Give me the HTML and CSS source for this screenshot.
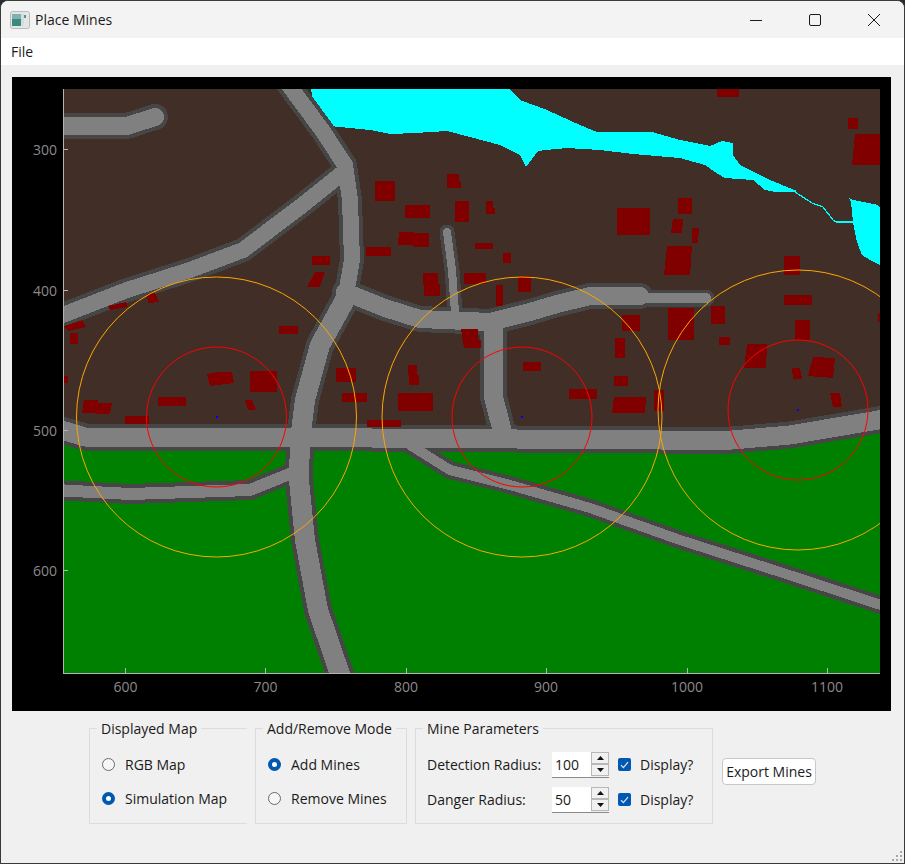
FILE: index.html
```html
<!DOCTYPE html>
<html lang="en">
<head>
  <meta charset="UTF-8">
  <meta name="viewport" content="width=device-width, initial-scale=1.0">
  <title>Place Mines</title>
  <link rel="stylesheet" href="styles.css">
</head>
<body>
  <div class="window">
    <div class="titlebar">
      <svg class="app-icon" width="20" height="18" viewBox="0 0 20 18">
        <rect x="0.5" y="0.5" width="19" height="17" rx="2" fill="#e4e6e6" stroke="#b9bcbc"/>
        <rect x="2" y="3" width="9" height="12" fill="#3b8a7c"/>
        <rect x="2" y="3" width="9" height="5" fill="#7fb0b4"/>
        <rect x="11" y="3" width="3" height="12" fill="#d5dcdc"/>
        <rect x="14" y="4" width="2" height="3" fill="#5f8f9a"/>
      </svg>
      <span class="title">Place Mines</span>
      <div class="caption-buttons">
        <svg class="caption-btn" width="12" height="12" viewBox="0 0 12 12"><path d="M0 6.5H12" stroke="#1a1a1a" fill="none"/></svg>
        <svg class="caption-btn" width="12" height="12" viewBox="0 0 12 12"><rect x="0.5" y="0.5" width="11" height="11" rx="1.5" stroke="#1a1a1a" fill="none"/></svg>
        <svg class="caption-btn" width="12" height="12" viewBox="0 0 12 12"><path d="M0 0L12 12M12 0L0 12" stroke="#1a1a1a" fill="none"/></svg>
      </div>
    </div>
    <div class="menubar"><span>File</span></div>

    <div class="plot">
      <svg width="879" height="634" viewBox="12 77 879 634">
        <defs>
          <clipPath id="map-area"><rect x="63" y="89" width="817" height="584"/></clipPath>
        </defs>
        <g clip-path="url(#map-area)" shape-rendering="crispEdges">
          <rect x="63" y="89" width="817" height="584" fill="#412f27"/>
          <polygon fill="#008000" points="63,440 300,440 660,440 790,437 880,420 880,673 63,673"/>

          <!-- water -->
          <polygon fill="#00ffff" points="311,89 316,117 330,126 370,130 390,134 415,133 447,131 470,137 500,145 520,155 526,167 538,151 545,150 567,148 600,150 633,154 680,158 705,165 715,172 725,178 753,180 765,190 775,192 795,192 797,191 770,180 740,165 733,155 733,143 722,141 710,146 680,140 652,132 597,132 580,125 547,110 520,100 510,89"/>
          <polyline fill="none" stroke="#00ffff" stroke-width="1.2" points="795,192 812,203 823,207 833,220 836,222 853,222"/>
          <polygon fill="#00ffff" points="849,198 853,200 878,205 880,208 880,265 870,260 862,255 857,242 853,222 851,202"/>

          <!-- road casing -->
          <g fill="none" stroke="#464646" stroke-linejoin="round" stroke-linecap="round">
            <polyline stroke-width="26" points="55,126 127,126 155,117"/>
            <polyline stroke-width="24" points="340,175 300,207 243,250 190,270 127,290 55,318"/>
            <polyline stroke-width="26" points="345,292 385,308 420,319 490,322 530,312 557,304 590,296 640,296"/>
            <polyline stroke-width="17" points="640,298 706,298"/>
            <polyline stroke-width="15" points="447,232 452,270 455,312"/>
            <polyline stroke-width="27" points="493,325 493,395 502,430"/>
            <polyline stroke-width="27" points="55,428 85,437 225,437 660,440 720,441 790,435 890,418"/>
            <polyline stroke-width="20" points="55,490 130,494 250,490 292,473"/>
            <polyline stroke-width="18" points="410,445 450,470 510,485 590,508 680,540 780,572 890,608"/>
            <polyline stroke-width="24" points="285,80 322,130 345,165 350,200 352,260 345,300"/>
            <polyline stroke-width="28" points="345,300 320,345 305,400 300,440 299,480 305,540 318,610 342,680"/>
          </g>
          <!-- road surface -->
          <g fill="none" stroke="#808080" stroke-linejoin="round" stroke-linecap="round">
            <polyline stroke-width="18" points="55,126 127,126 155,117"/>
            <polyline stroke-width="16" points="340,175 300,207 243,250 190,270 127,290 55,318"/>
            <polyline stroke-width="18" points="345,292 385,308 420,319 490,322 530,312 557,304 590,296 640,296"/>
            <polyline stroke-width="10" points="640,298 706,298"/>
            <polyline stroke-width="8" points="447,232 452,270 455,312"/>
            <polyline stroke-width="19" points="493,325 493,395 502,430"/>
            <polyline stroke-width="19" points="55,428 85,437 225,437 660,440 720,441 790,435 890,418"/>
            <polyline stroke-width="12" points="55,490 130,494 250,490 292,473"/>
            <polyline stroke-width="10" points="410,445 450,470 510,485 590,508 680,540 780,572 890,608"/>
            <polyline stroke-width="16" points="285,80 322,130 345,165 350,200 352,260 345,300"/>
            <polyline stroke-width="20" points="345,300 320,345 305,400 300,440 299,480 305,540 318,610 342,680"/>
          </g>

          <!-- buildings -->
          <g fill="#800000">
            <rect x="312" y="256" width="18" height="9"/>
            <polygon points="315,272 325,272 320,287 307,287"/>
            <rect x="279" y="326" width="19" height="8"/>
            <rect x="336" y="368" width="20" height="14"/>
            <rect x="342" y="393" width="25" height="9"/>
            <rect x="250" y="371" width="27" height="21"/>
            <polygon points="207,374 218,372 232,372 234,383 210,386"/>
            <rect x="158" y="397" width="28" height="9"/>
            <polygon points="245,400 252,400 256,410 248,410"/>
            <polygon points="84,400 98,400 98,403 112,403 110,414 82,413"/>
            <rect x="125" y="416" width="24" height="8"/>
            <polygon points="64,326 82,320 86,327 68,331"/>
            <rect x="70" y="333" width="8" height="11"/>
            <rect x="64" y="376" width="4" height="7"/>
            <polygon points="108,306 126,302 128,307 110,310"/>
            <polygon points="147,294 155,293 159,302 148,303"/>
            <rect x="375" y="181" width="20" height="20"/>
            <polygon points="447,174 459,174 459,181 461,181 461,188 447,188"/>
            <rect x="405" y="205" width="25" height="13"/>
            <rect x="455" y="201" width="14" height="21"/>
            <polygon points="486,201 493,201 493,208 495,208 495,214 486,214"/>
            <rect x="617" y="208" width="33" height="27"/>
            <polygon points="399,232 414,232 414,233 429,233 429,247 413,247 413,245 398,245"/>
            <rect x="366" y="247" width="25" height="9"/>
            <rect x="475" y="243" width="18" height="6"/>
            <rect x="503" y="253" width="8" height="10"/>
            <polygon points="423,273 438,273 438,284 440,284 440,296 424,296"/>
            <rect x="464" y="273" width="22" height="11"/>
            <rect x="496" y="285" width="7" height="21"/>
            <rect x="518" y="276" width="13" height="16"/>
            <rect x="622" y="315" width="18" height="16"/>
            <rect x="615" y="338" width="10" height="20"/>
            <rect x="614" y="376" width="14" height="10"/>
            <polygon points="614,397 646,397 645,413 612,413"/>
            <rect x="654" y="390" width="10" height="21"/>
            <rect x="569" y="389" width="28" height="10"/>
            <rect x="523" y="362" width="18" height="9"/>
            <polygon points="461,329 478,329 478,340 481,340 481,348 464,348"/>
            <polygon points="408,365 417,365 417,375 419,375 419,385 409,385"/>
            <rect x="398" y="393" width="35" height="18"/>
            <rect x="367" y="420" width="34" height="7"/>
            <rect x="717" y="89" width="22" height="8"/>
            <rect x="848" y="118" width="10" height="11"/>
            <polygon points="855,134 880,134 880,165 852,165"/>
            <rect x="678" y="198" width="14" height="16"/>
            <polygon points="673,219 683,219 682,233 671,233"/>
            <polygon points="692,228 699,228 698,243 692,243"/>
            <polygon points="667,246 692,246 690,275 664,275"/>
            <rect x="784" y="256" width="16" height="19"/>
            <rect x="784" y="295" width="28" height="10"/>
            <rect x="711" y="306" width="14" height="18"/>
            <rect x="668" y="308" width="26" height="32"/>
            <rect x="719" y="337" width="11" height="8"/>
            <rect x="795" y="320" width="15" height="20"/>
            <rect x="878" y="313" width="2" height="9"/>
            <polygon points="747,344 767,344 766,368 744,368"/>
            <polygon points="813,357 835,358 833,378 808,376"/>
            <polygon points="792,368 800,368 802,379 793,379"/>
            <polygon points="830,393 840,393 842,407 833,407"/>
          </g>
        </g>

        <!-- mine markers -->
        <g clip-path="url(#map-area)" fill="none">
          <circle cx="216.5" cy="417" r="140" stroke="#ffa500"/>
          <circle cx="216.5" cy="417" r="70" stroke="#ff0000"/>
          <circle cx="522" cy="417" r="140" stroke="#ffa500"/>
          <circle cx="522" cy="417" r="70" stroke="#ff0000"/>
          <circle cx="798" cy="410" r="140" stroke="#ffa500"/>
          <circle cx="798" cy="410" r="70" stroke="#ff0000"/>
          <rect x="216" y="416" width="2" height="2" fill="#0000ff"/>
          <rect x="521" y="416" width="2" height="2" fill="#0000ff"/>
          <rect x="797" y="409" width="2" height="2" fill="#0000ff"/>
        </g>

        <!-- axes -->
        <g stroke="#b4b4b4" fill="none" shape-rendering="crispEdges">
          <path d="M63.5 89V673.5H880"/>
          <path d="M63 149.5H68M63 290.5H68M63 430.5H68M63 570.5H68"/>
          <path d="M125.5 673V668M265.5 673V668M406.5 673V668M546.5 673V668M687.5 673V668M827.5 673V668"/>
        </g>
        <g class="tick-label">
          <text x="57" y="155" text-anchor="end">300</text>
          <text x="57" y="296" text-anchor="end">400</text>
          <text x="57" y="436" text-anchor="end">500</text>
          <text x="57" y="576" text-anchor="end">600</text>
          <text x="125.5" y="692" text-anchor="middle">600</text>
          <text x="265.5" y="692" text-anchor="middle">700</text>
          <text x="406" y="692" text-anchor="middle">800</text>
          <text x="546" y="692" text-anchor="middle">900</text>
          <text x="687" y="692" text-anchor="middle">1000</text>
          <text x="827" y="692" text-anchor="middle">1100</text>
        </g>
      </svg>
    </div>

    <div class="controls">
      <fieldset class="group group-map">
        <legend>Displayed Map</legend>
        <div class="radio-row"><span class="radio"></span>RGB Map</div>
        <div class="radio-row"><span class="radio on"></span>Simulation Map</div>
      </fieldset>
      <fieldset class="group group-mode">
        <legend>Add/Remove Mode</legend>
        <div class="radio-row"><span class="radio on"></span>Add Mines</div>
        <div class="radio-row"><span class="radio"></span>Remove Mines</div>
      </fieldset>
      <fieldset class="group group-params">
        <legend>Mine Parameters</legend>
        <div class="param-row">
          <span class="param-label">Detection Radius:</span>
          <div class="spin">
            <span class="spin-value">100</span>
            <div class="spin-buttons">
              <span class="spin-btn"><svg width="7" height="4" viewBox="0 0 7 4"><path d="M3.5 0L7 4H0z" fill="#111"/></svg></span>
              <span class="spin-btn"><svg width="7" height="4" viewBox="0 0 7 4"><path d="M0 0H7L3.5 4z" fill="#111"/></svg></span>
            </div>
          </div>
          <span class="check"><svg width="9" height="8" viewBox="0 0 9 8"><path d="M1 4.2L3.4 6.6L8 1.2" stroke="#dfe9f5" stroke-width="1.2" fill="none"/></svg></span>
          <span>Display?</span>
        </div>
        <div class="param-row">
          <span class="param-label">Danger Radius:</span>
          <div class="spin">
            <span class="spin-value">50</span>
            <div class="spin-buttons">
              <span class="spin-btn"><svg width="7" height="4" viewBox="0 0 7 4"><path d="M3.5 0L7 4H0z" fill="#111"/></svg></span>
              <span class="spin-btn"><svg width="7" height="4" viewBox="0 0 7 4"><path d="M0 0H7L3.5 4z" fill="#111"/></svg></span>
            </div>
          </div>
          <span class="check"><svg width="9" height="8" viewBox="0 0 9 8"><path d="M1 4.2L3.4 6.6L8 1.2" stroke="#dfe9f5" stroke-width="1.2" fill="none"/></svg></span>
          <span>Display?</span>
        </div>
      </fieldset>
      <button class="export">Export Mines</button>
    </div>

    <svg class="grip" width="12" height="12" viewBox="0 0 12 12" fill="#a8a8a8">
      <rect x="8" y="0" width="2" height="2"/>
      <rect x="4" y="4" width="2" height="2"/><rect x="8" y="4" width="2" height="2"/>
      <rect x="0" y="8" width="2" height="2"/><rect x="4" y="8" width="2" height="2"/><rect x="8" y="8" width="2" height="2"/>
    </svg>
  </div>
</body>
</html>
```

FILE: styles.css
```css
* {
  box-sizing: border-box;
}
html, body {
  margin: 0;
  height: 100%;
  background: #2b2b2b;
}
body {
  font-family: "Open Sans", "Noto Sans", sans-serif;
  font-size: 14px;
  color: #1a1a1a;
}
.window {
  position: relative;
  height: 864px;
  background: #f0f0f0;
  border: 1px solid #3a3a3a;
  border-radius: 8px 8px 0 0;
  overflow: hidden;
}
.titlebar {
  height: 37px;
  background: #f3f3f3;
  display: flex;
  align-items: center;
  padding-left: 9px;
}
.app-icon {
  margin-right: 5px;
}
.title {
  font-size: 14px;
}
.caption-buttons {
  margin-left: auto;
  display: flex;
  padding-right: 24px;
}
.caption-btn {
  margin-left: 47px;
}
.menubar {
  height: 27px;
  background: #fff;
  display: flex;
  align-items: center;
  padding-left: 10px;
}
.plot {
  margin: 12px 13px 0 11px;
  height: 634px;
  background: #000;
}
.plot svg {
  display: block;
}
.tick-label text {
  font-size: 14px;
  fill: #8a8a8a;
}
.controls {
  display: flex;
  align-items: flex-start;
  padding: 8px 0 0 88px;
}
.group {
  margin: 0 8px 0 0;
  padding: 9px 0 0 12px;
  height: 105px;
  border: 1px solid #dcdcdc;
  min-width: 0;
}
.group legend {
  margin-left: -5px;
  padding: 0 4px;
  line-height: 19px;
  white-space: nowrap;
}
.group-map {
  width: 158px;
  border-right-color: transparent;
}
.group-mode {
  width: 152px;
}
.group-params {
  width: 298px;
  padding: 9px 0 0 11px;
}
.group-params legend {
  margin-left: -4px;
}
.radio-row {
  height: 34px;
  display: flex;
  align-items: center;
}
.radio {
  width: 13px;
  height: 13px;
  border-radius: 50%;
  border: 1px solid #6a6a6a;
  background: #f6f6f6;
  margin-right: 10px;
}
.radio.on {
  border: 4px solid #0058b0;
  background: #fff;
}
.param-row {
  height: 35px;
  display: flex;
  align-items: center;
}
.param-label {
  width: 125px;
}
.spin {
  width: 57px;
  height: 26px;
  display: flex;
  background: #fff;
  border-bottom: 1px solid #8a8a8a;
}
.spin-value {
  flex: 1;
  padding-left: 3px;
  line-height: 25px;
}
.spin-buttons {
  width: 18px;
  display: flex;
  flex-direction: column;
  background: #efefef;
  padding: 0 0 1px;
}
.spin-btn {
  flex: 1;
  border: 1px solid #b8b8b8;
  background: #f1f1f1;
  display: flex;
  align-items: center;
  justify-content: center;
}
.check {
  width: 13px;
  height: 13px;
  border-radius: 2px;
  background: #0058b0;
  margin: 0 9px;
  display: flex;
  align-items: center;
  justify-content: center;
}
.export {
  margin: 39px 0 0 1px;
  width: 94px;
  height: 27px;
  padding: 0;
  font: inherit;
  color: inherit;
  background: #fff;
  border: 1px solid #c8c8c8;
  border-radius: 4px;
}
.grip {
  position: absolute;
  right: 0;
  bottom: 0;
}
```
